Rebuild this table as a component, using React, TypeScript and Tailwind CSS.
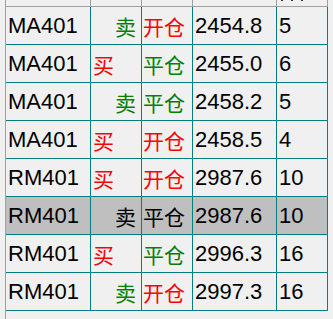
type Trade = {
  code: string;
  side: "买" | "卖";
  action: "开仓" | "平仓";
  price: string;
  qty: string;
};

const trades: Trade[] = [
  { code: "MA401", side: "卖", action: "开仓", price: "2454.8", qty: "5" },
  { code: "MA401", side: "买", action: "平仓", price: "2455.0", qty: "6" },
  { code: "MA401", side: "卖", action: "平仓", price: "2458.2", qty: "5" },
  { code: "MA401", side: "买", action: "开仓", price: "2458.5", qty: "4" },
  { code: "RM401", side: "买", action: "开仓", price: "2987.6", qty: "10" },
  { code: "RM401", side: "卖", action: "平仓", price: "2987.6", qty: "10" },
  { code: "RM401", side: "买", action: "平仓", price: "2996.3", qty: "16" },
  { code: "RM401", side: "卖", action: "开仓", price: "2997.3", qty: "16" },
];

const selectedRow = 5;

const latin = "font-['Liberation_Sans',Arial,sans-serif] text-[22px] leading-[22px]";
const cjk = "font-['Noto_Sans_CJK_SC','Noto_Sans_CJK_SC',sans-serif] text-[21px] leading-[22px]";

function Row({ trade, selected }: { trade: Trade; selected: boolean }) {
  const sideColor = selected
    ? "text-black"
    : trade.side === "买"
      ? "text-[#ff0000]"
      : "text-[#008000]";
  const actionColor = selected
    ? "text-black"
    : trade.action === "开仓"
      ? "text-[#ff0000]"
      : "text-[#008000]";

  return (
    <div
      className={`flex h-[38px] border-b border-[#008080] text-black ${
        selected ? "bg-[#bfbfbf]" : ""
      }`}
    >
      <div className={`flex w-[85px] items-center border-r border-[#008080] pl-[2px] ${latin}`}>
        {trade.code}
      </div>
      <div
        className={`flex w-[51px] items-center border-r border-[#008080] ${cjk} ${sideColor} ${
          trade.side === "卖" ? "justify-end pr-[5px]" : "pl-[2px]"
        }`}
      >
        {trade.side}
      </div>
      <div className={`flex w-[51px] items-center border-r border-[#008080] pl-[1px] ${cjk} ${actionColor}`}>
        {trade.action}
      </div>
      <div className={`flex w-[84px] items-center border-r border-[#008080] pl-[2px] ${latin}`}>
        {trade.price}
      </div>
      <div className={`flex w-[51px] items-center border-r border-[#008080] pl-[2px] ${latin}`}>
        {trade.qty}
      </div>
    </div>
  );
}

export default function App() {
  return (
    <div className="flex h-[319px] w-[333px] overflow-hidden bg-[#f0f0f0] pl-[5px]">
      <div className="flex h-full flex-col border-l border-[#a0a0a0]">
        {/* header strip, mostly scrolled out of view */}
        <div className="flex h-[7px] w-[322px] border-b border-[#a0a0a0]">
          <div className="w-[85px] border-r border-[#a0a0a0]" />
          <div className="w-[51px] border-r border-[#a0a0a0]" />
          <div className="w-[51px] border-r border-[#a0a0a0]" />
          <div className="w-[84px] border-r border-[#a0a0a0]" />
          <div className="flex w-[51px] items-start gap-[8px] border-r border-[#a0a0a0] pl-[4px]">
            <span className="h-[1px] w-[2px] bg-[#333]" />
            <span className="h-[1px] w-[2px] bg-[#333]" />
            <span className="h-[1px] w-[2px] bg-[#333]" />
          </div>
        </div>
        <div className="w-[322px]">
          {trades.map((t, i) => (
            <Row key={i} trade={t} selected={i === selectedRow} />
          ))}
        </div>
      </div>
    </div>
  );
}
